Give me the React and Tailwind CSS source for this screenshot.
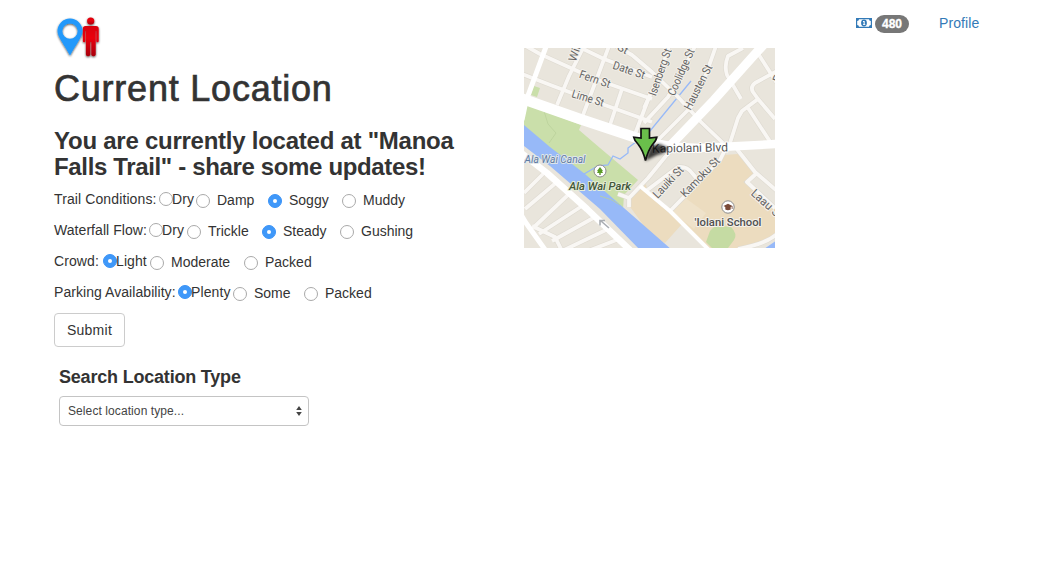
import React from "react";

function Radio({ checked, low }) {
  return (
    <span
      className={
        "box-border flex h-[14px] w-[14px] shrink-0 items-center justify-center rounded-full border " +
        (low ? "mt-[2px] " : "") +
        (checked ? "border-[#3b93f7] bg-[#3f98f9]" : "border-[#a9a9a9] bg-white")
      }
    >
      {checked && <span className="h-[4px] w-[4px] rounded-full bg-white" />}
    </span>
  );
}

const rows = [
  {
    label: "Trail Conditions:", w: "w-[105px]", tl: "tracking-[0.11px]",
    items: [["Dry", "w-[37px]"], ["Damp", "w-[72px]"], ["Soggy", "w-[74px]", true], ["Muddy", "w-[80px]"]],
  },
  {
    label: "Waterfall Flow:", w: "w-[95px]", tl: "tracking-[0.06px]",
    items: [["Dry", "w-[38px]"], ["Trickle", "w-[75px]"], ["Steady", "w-[78px]", true], ["Gushing", "w-[80px]"]],
  },
  {
    label: "Crowd:", w: "w-[49px]", tl: "tracking-[0.1px]",
    items: [["Light", "w-[47px]", true], ["Moderate", "w-[94px]"], ["Packed", "w-[80px]"]],
  },
  {
    label: "Parking Availability:", w: "w-[124px]", tl: "tracking-[0.06px]",
    items: [["Plenty", "w-[55px]", true], ["Some", "w-[71px]"], ["Packed", "w-[80px]"]],
  },
];

function Logo() {
  return (
    <svg className="block h-[46px] w-[48px]" viewBox="54 14 48 46">
      <defs>
        <filter id="ds" x="-30%" y="-30%" width="160%" height="160%">
          <feDropShadow dx="0" dy="1" stdDeviation="1.2" floodOpacity="0.7" />
        </filter>
        <linearGradient id="red" x1="0" y1="0" x2="0" y2="1">
          <stop offset="0" stopColor="#d8000b" />
          <stop offset="0.4" stopColor="#ea0010" />
          <stop offset="1" stopColor="#a80008" />
        </linearGradient>
      </defs>
      <g filter="url(#ds)">
        <path fillRule="evenodd" fill="#2199fb" d="M70 18.500a12.500 12.500 0 0 0-12.500 12.500c0 6 7 14 12.500 24.500c5.500-10.500 12.500-18.500 12.500-24.500a12.500 12.500 0 0 0-12.500-12.500zM70 23.400a7.700 7.700 0 1 1 0 15.400a7.700 7.700 0 0 1 0-15.400z" />
        <g fill="url(#red)">
          <circle cx="90.700" cy="21" r="3.600" />
          <path d="M85.500 26h10.400q2.800 0 2.800 2.800V41q0 1.300-1.200 1.300t-1.200-1.300V31h-.6v23.500q0 1.700-2.200 1.700t-2.200-1.700V42h-1v12.500q0 1.700-2.200 1.700t-2.200-1.700V31h-.6v10q0 1.300-1.200 1.300t-1.200-1.300V28.800q0-2.800 2.600-2.800z" />
        </g>
      </g>
    </svg>
  );
}

const minorStreets = [
  "M577 46L604 59L652 77", "M524 45L540 54L595 79L652 99", "M522 74L553 86L588 99L652 122",
  "M584 46L569 76L557 105", "M609 46L597 78L583 115", "M622 89L610 125", "M651 92L635 134",
  "M616 46L632 55L652 72L678 97L701 122L723 143", "M669 46L660 74L644 108", "M695 46L682 73L668 97L644 123",
  "M716 46L704 80L691 107L655 143", "M743 48L728 56Q724 66 727 75L741 99",
  "M757 52L777 83", "M777 71L755 83Q750 87 753 92L758 99L775 119", "M758 99L742 111L738 118L730 143",
  "M748 108L771 143", "M524 193L545 172", "M525 209L557 182", "M533 228L570 193", "M539 234L582 206",
  "M552 241L595 217", "M562 251L608 229", "M588 251L619 239", "M532 226L555 237L562 251",
  "M618 194L629 198L629 207M629 198L648 178L670 151", "M670 211L720 160L726 148",
  "M646 191L678 167Q687 166 692 173L698 180", "M736 148L755 172L777 191",
  "M757 173L747 182L777 210", "M777 234Q766 244 738 249",
];

function Label({ x, y, r = 0, size = 11.5, fill = "#636363", len, children, italic, weight, anchor = "middle", halo = "#f4f1eb" }) {
  return (
    <text
      transform={`translate(${x} ${y}) rotate(${r})`}
      textAnchor={anchor} dominantBaseline="central" fontSize={size} fill={fill}
      fontStyle={italic ? "italic" : "normal"} fontWeight={weight || 400}
      textLength={len} lengthAdjust="spacingAndGlyphs" stroke={halo} strokeWidth="2" strokeLinejoin="round" paintOrder="stroke"
    >
      {children}
    </text>
  );
}

function Map() {
  return (
    <svg className="block h-[200px] w-[251px] font-[Roboto,sans-serif]" viewBox="524 48 251 200">
      <defs>
        <filter id="soft" x="-30%" y="-30%" width="160%" height="160%"><feGaussianBlur stdDeviation="1.5" /></filter>
      </defs>
      <rect x="524" y="48" width="251" height="200" fill="#e9e5dc" />
      <path fill="#cadfaa" d="M524 108L528 105L581 125L579 130L600 148L638 180L624 195L623 210L524 126zM534 86l6 2l-3 9l-6-2z" />
      <path fill="#ecdcbf" d="M628 204L631 197L646 184L648 195L682 224L665 243L652 237z" />
      <path fill="#ecdcbf" d="M670 213L723 155L738 154L754 174L745 183L777 212V232L762 243L738 249H708z" />
      <path fill="#efe2ca" d="M684 197L706 213L694 229L672 212z" />
      <path fill="#c5dba3" d="M706 242L710 231Q716 224 722 226L731 227Q738 234 734 240L728 248H712z" />
      <path fill="#97b9f8" d="M524 125L550 147L585 174L648 229L672 250H640L600 209L550 166L524 146zM777 240L764 249H777z" />
      <path fill="none" stroke="#97b9f8" strokeWidth="1.3" d="M584 174L598 166L608 165L613 156L620 159L628 153L628 148L650 131L691 81" />
      <path fill="none" stroke="#bad09b" strokeWidth=".8" d="M544 111l4 13l8 9l-7 10M600 196l12 4l8 5" />
      <g fill="none" stroke="#dedad1" strokeWidth="5">
        {minorStreets.map((d) => <path key={d} d={d} />)}
      </g>
      <g fill="none" stroke="#f9f7f4" strokeWidth="3.8" strokeLinejoin="round">
        {minorStreets.map((d) => <path key={d} d={d} />)}
      </g>
      <g fill="none" stroke="#fff" strokeLinejoin="round">
        <path strokeWidth="5" d="M547 44L526 101L522 120" />
        <path strokeWidth="6.5" d="M520 152L547 173L587 209L631 251" />
        <path strokeWidth="5" d="M520 213L526 223L546 251" />
        <path strokeWidth="4" d="M640 186L670 211L709 250" />
        <path strokeWidth="9" d="M768 40L756 53L714 100L668 148" />
        <path strokeWidth="10.5" d="M520 98L580 119L640 139" />
        <path strokeWidth="8.5" d="M630 136Q665 148 700 148L777 144" />
      </g>
      <path fill="none" stroke="#a9adb2" strokeWidth="1.6" d="M601 221l8 7M600 225.500v-5h5" />
      <Label x={572} y={61} r={-72} anchor="start">Win</Label>
      <Label x={623} y={48.5} r={28}>St</Label>
      <Label x={629} y={70} r={19} len={33}>Date St</Label>
      <Label x={595} y={79} r={19} len={32}>Fern St</Label>
      <Label x={588} y={98} r={17} len={33}>Lime St</Label>
      <Label x={660} y={72} r={-71} len={49}>Isenberg St</Label>
      <Label x={681} y={72} r={-66} len={50}>Coolidge St</Label>
      <Label x={698} y={87} r={-63} len={49}>Hausten St</Label>
      <Label x={668} y={182} r={-47} len={39}>Lauiki St</Label>
      <Label x={700} y={177} r={-46} len={51}>Kamoku St</Label>
      <Label x={767} y={204} r={42} len={38}>Laau St</Label>
      <Label x={776} y={82} r={-70} anchor="start">Pa</Label>
      <Label x={555} y={159} italic size={11} fill="#5f7ba3" len={61} halo="#dfe6ea">Ala Wai Canal</Label>
      <Label x={600} y={186} italic weight={500} size={11.5} fill="#43573a" len={62} halo="#e7eed8">Ala Wai Park</Label>
      <Label x={728} y={222} weight={500} size={11.5} fill="#505050" len={67}>'Iolani School</Label>
      <g fill="#fff" stroke="#8b8b8b" strokeWidth="1">
        <circle cx="600" cy="171" r="6" />
        <circle cx="728" cy="207" r="6.2" />
      </g>
      <path fill="#5b9b28" d="M600 167l3 4h-1l1 2h-2.300v2h-1.400v-2H597l1-2h-1z" />
      <path fill="#7a4a38" d="M723.500 206l4.500-2.300l4.500 2.300v3h-.8v-2.500l-1 .5v2.500q-2.700 1.500-5.400 0V207z" />
      <Label x={690} y={148} r={-1} size={12} fill="#555" len={76} halo="#ffffff">Kapiolani Blvd</Label>
      <path filter="url(#soft)" opacity=".75" d="M645 161L651 146L660 144L668 148Q667 153 657 155z" />
      <path fill="#6abf4b" stroke="#111" strokeWidth="1.700" strokeLinejoin="miter" d="M641 128.500h8.500v9.500l7.300-.8q-.4 3.400-4.300 7.300q-4.500 6-7 16q-2.500-10-7.200-16q-4-3.800-4.600-7.300l7.300.8z" />
    </svg>
  );
}

export default function App() {
  return (
    <div className="flex h-[569px] w-[1046px] overflow-hidden bg-white font-['Liberation_Sans',Arial,sans-serif] text-[14px] leading-[20px] text-[#333]">
      <div className="w-[524px] shrink-0 pl-[54px] pt-[14px]">
        <Logo />
        <h1 className="mt-[9px] whitespace-nowrap text-[36px] leading-[40px] tracking-[0.78px] [-webkit-text-stroke:0.7px_#333]">Current Location</h1>
        <h3 className="mt-[19px] whitespace-nowrap text-[24px] font-bold leading-[26px] tracking-[-0.25px]">
          You are currently located at "Manoa
          <br />
          <span className="tracking-[-0.35px]">Falls Trail" - share some updates!</span>
        </h3>
        <div className="mt-[4px]">
          {rows.map((row) => (
            <div key={row.label} className="flex h-[31px] items-center whitespace-nowrap">
              <span className={row.w + " shrink-0 -mt-[2px] " + row.tl}>{row.label}</span>
              {row.items.map(([name, w, on], i) => (
                <label key={name} className={w + " flex shrink-0 items-center " + (i ? "gap-[7px]" : "-mt-[2px]")}>
                  <Radio checked={on} low={i > 0} />
                  <span className={i ? "" : "-ml-px tracking-[0.1px]"}>{name}</span>
                </label>
              ))}
            </div>
          ))}
        </div>
        <button className="mt-[5px] block h-[34px] w-[71px] rounded-[4px] border border-[#ccc] bg-white text-[14px] tracking-[0.25px]">Submit</button>
        <div className="ml-[5px] mt-[20px]">
          <h4 className="text-[18px] font-bold leading-[20px] tracking-[-0.2px]">Search Location Type</h4>
          <div className="mt-[9px] flex h-[30px] w-[250px] items-center justify-between rounded-[4px] border border-[#c4c4c4] pl-[8px] pr-[6px] text-[12px] text-[#444]">
            <span className="tracking-[0.09px]">Select location type...</span>
            <svg className="h-[10px] w-[6px]" viewBox="0 0 6 10" fill="#444">
              <path d="M3 0L5.800 4H.2zM3 10L.2 6h5.600z" />
            </svg>
          </div>
        </div>
      </div>
      <div className="flex-1">
        <div className="flex h-[48px] items-start pl-[332px] pt-[13px] text-[#337ab7]">
          <svg className="mt-[5px] h-[10px] w-[16px]" viewBox="0 0 16 10">
            <rect width="16" height="10" fill="#337ab7" />
            <path fill="#fff" d="M3 1.200h10q0 1.800 1.800 1.800v4q-1.800 0-1.800 1.800H3Q3 7 1.200 7V3Q3 3 3 1.200z" />
            <ellipse cx="8" cy="5" rx="2.900" ry="3.400" fill="#337ab7" />
            <path fill="#fff" d="M7 3h1.700v3.200h.6V7H7v-.8h.6V4H7z" />
          </svg>
          <span className="ml-[3px] mt-[2px] flex h-[18px] w-[34px] items-center justify-center rounded-[10px] bg-[#777] text-[12px] font-bold text-white [-webkit-text-stroke:0.3px_#fff]">480</span>
          <a className="ml-[30px] tracking-[0.08px]">Profile</a>
        </div>
        <Map />
      </div>
    </div>
  );
}
